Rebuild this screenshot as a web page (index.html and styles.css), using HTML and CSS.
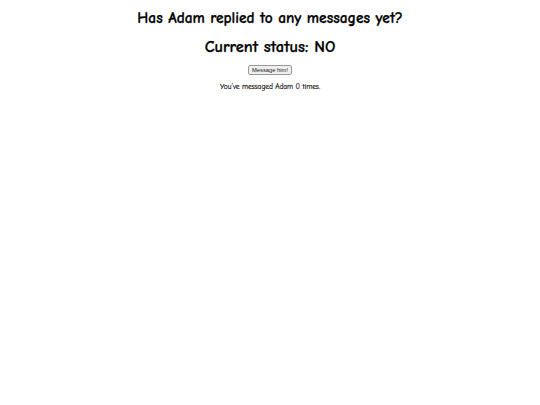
FILE: index.html
```html
<!DOCTYPE html>
<html lang="en">
<head>
<meta charset="utf-8">
<title>Has Adam replied?</title>
<link rel="stylesheet" href="styles.css">
</head>
<body>
<main class="page">
  <h1 class="question">Has Adam replied to any messages yet?</h1>
  <h2 class="status">Current status: NO</h2>
  <button class="message-btn" type="button">Message him!</button>
  <p class="counter">You've messaged Adam 0 times.</p>
</main>
</body>
</html>
```
FILE: styles.css
```css
html, body {
  margin: 0;
  padding: 0;
  background: #fff;
}

.page {
  padding: 4px;
  text-align: center;
  font-family: "Comic Sans MS", "Comic Neue", "Comic Sans", "DejaVu Sans", sans-serif;
  color: #000;
}

.question {
  font-size: 15.4px;
  font-weight: 900;
  margin: 6px 0 10px;
  line-height: 1.15;
  -webkit-text-stroke: 0.25px #000;
}

.status {
  font-size: 16.4px;
  font-weight: 900;
  margin: 0 0 1px;
  line-height: 1.15;
  -webkit-text-stroke: 0.25px #000;
}

.message-btn {
  font-family: "Liberation Sans", Arial, sans-serif;
  font-size: 5.8px;
  padding: 1px 3px;
  border: 1px solid #999;
  border-radius: 2px;
  background: #efefef;
  color: #222;
}

.counter {
  font-size: 7.3px;
  margin: 6px 0 0;
  -webkit-text-stroke: 0.15px #000;
}
```
